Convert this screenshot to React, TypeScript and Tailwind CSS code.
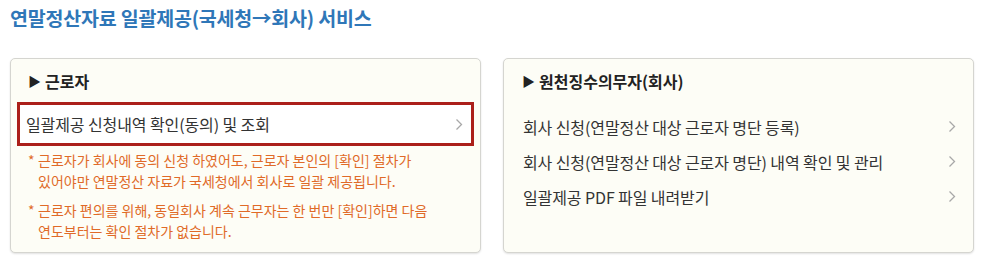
import React from "react";

const font = { fontFamily: '"Noto Sans CJK KR", "Noto Sans", sans-serif' };

function Chevron() {
  return (
    <svg width="8" height="13" viewBox="0 0 8 13" className="shrink-0">
      <polyline points="1.5,1.5 6.5,6.5 1.5,11.5" fill="none" stroke="#a8a8a8" strokeWidth="1.3" />
    </svg>
  );
}

export default function App() {
  return (
    <div className="w-[990px] h-[273px] bg-white px-[10px] pt-[5px] overflow-hidden" style={font}>
      <h1 className="text-[19.5px] leading-[26px] font-bold text-[#2f77b8] tracking-[-0.2px]">
        연말정산자료 일괄제공(국세청→회사) 서비스
      </h1>
      <div className="mt-[27px] flex gap-[22px]">
        <div className="w-[471px] h-[195px] rounded-[5px] border border-[#d5d5d0] bg-[#fdfdf6] shadow-[0_1px_2px_rgba(0,0,0,0.12)] pt-[12px]">
          <div className="pl-[17px] text-[16px] leading-[20px] font-bold text-[#222] flex items-center gap-[4px]">
            <span className="text-[13px]">▶</span>
            <span>근로자</span>
          </div>
          <div className="mt-[11px] mx-[6px] h-[44px] border-[3px] border-[#ab1f1a] bg-white flex items-center justify-between pl-[6px] pr-[8px]">
            <span className="text-[16px] leading-[38px] text-[#333] tracking-[-0.1px]">
              일괄제공 신청내역 확인(동의) 및 조회
            </span>
            <Chevron />
          </div>
          <div className="mt-[4px] pl-[17px] text-[14px] leading-[21px] text-[#e06a28]">
            <div className="flex">
              <span className="w-[10px] shrink-0">*</span>
              <span>
                근로자가 회사에 동의 신청 하였어도, 근로자 본인의 [확인] 절차가
                <br />
                있어야만 연말정산 자료가 국세청에서 회사로 일괄 제공됩니다.
              </span>
            </div>
            <div className="flex mt-[8px]">
              <span className="w-[10px] shrink-0">*</span>
              <span>
                근로자 편의를 위해, 동일회사 계속 근무자는 한 번만 [확인]하면 다음
                <br />
                연도부터는 확인 절차가 없습니다.
              </span>
            </div>
          </div>
        </div>
        <div className="w-[471px] h-[195px] rounded-[5px] border border-[#d5d5d0] bg-[#fdfdf6] shadow-[0_1px_2px_rgba(0,0,0,0.12)] pt-[12px]">
          <div className="pl-[18px] text-[16px] leading-[20px] font-bold text-[#222] flex items-center gap-[4px]">
            <span className="text-[13px]">▶</span>
            <span>원천징수의무자(회사)</span>
          </div>
          <div className="mt-[18px] pl-[19px] pr-[17px] text-[16px] text-[#333] tracking-[-0.1px]">
            {[
              "회사 신청(연말정산 대상 근로자 명단 등록)",
              "회사 신청(연말정산 대상 근로자 명단) 내역 확인 및 관리",
              "일괄제공 PDF 파일 내려받기",
            ].map((t) => (
              <div key={t} className="h-[35px] flex items-center justify-between">
                <span>{t}</span>
                <Chevron />
              </div>
            ))}
          </div>
        </div>
      </div>
    </div>
  );
}
